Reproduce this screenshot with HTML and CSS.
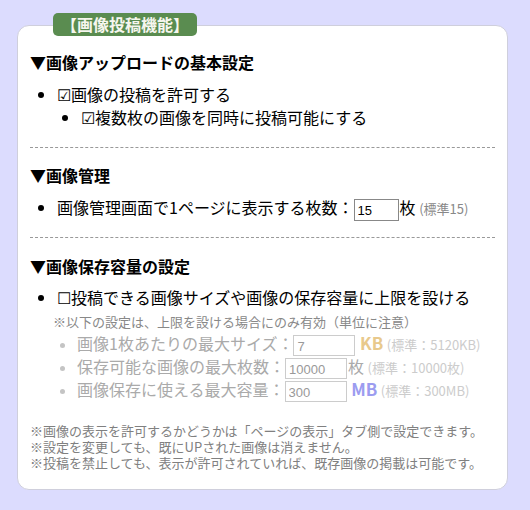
FILE: index.html
```html
<!DOCTYPE html>
<html lang="ja">
<head>
    <meta charset="UTF-8">
    <title>画像投稿機能</title>
    <link rel="stylesheet" href="styles.css">
</head>
<body>
    <div class="page">
        <div class="card">
            <div class="badge">【画像投稿機能】</div>

            <section class="sec">
                <h3 class="sec-title">▼画像アップロードの基本設定</h3>
                <ul class="opts">
                    <li>☑画像の投稿を許可する
                        <ul class="opts sub">
                            <li>☑複数枚の画像を同時に投稿可能にする</li>
                        </ul>
                    </li>
                </ul>
            </section>

            <hr class="sep">

            <section class="sec">
                <h3 class="sec-title">▼画像管理</h3>
                <ul class="opts">
                    <li>画像管理画面で1ページに表示する枚数：<input class="num" type="text" value="15">枚 <span class="hint">(標準15)</span></li>
                </ul>
            </section>

            <hr class="sep">

            <section class="sec sec-limit">
                <h3 class="sec-title">▼画像保存容量の設定</h3>
                <ul class="opts">
                    <li>☐投稿できる画像サイズや画像の保存容量に上限を設ける
                        <div class="note">※以下の設定は、上限を設ける場合にのみ有効（単位に注意）</div>
                        <ul class="opts off">
                            <li>画像1枚あたりの最大サイズ：<input class="num wide" type="text" value="7" disabled> <b class="kb">KB</b> <span class="hint">(標準：5120KB)</span></li>
                            <li>保存可能な画像の最大枚数：<input class="num wide" type="text" value="10000" disabled>枚 <span class="hint">(標準：10000枚)</span></li>
                            <li>画像保存に使える最大容量：<input class="num wide" type="text" value="300" disabled> <b class="mb">MB</b> <span class="hint">(標準：300MB)</span></li>
                        </ul>
                    </li>
                </ul>
            </section>

            <div class="foot">
                <p>※画像の表示を許可するかどうかは「ページの表示」タブ側で設定できます。</p>
                <p>※設定を変更しても、既にUPされた画像は消えません。</p>
                <p>※投稿を禁止しても、表示が許可されていれば、既存画像の掲載は可能です。</p>
            </div>
        </div>
    </div>
</body>
</html>
```

FILE: styles.css
```css
body{
    margin: 0;
    background-color: #dcdcfe;
    font-family: "Noto Sans CJK JP", sans-serif;
    color: #000;
}

.page{
    padding: 25px 22px 20px 17px;
}

.card{
    position: relative;
    background-color: #fff;
    border: 1px solid #cfcfdc;
    border-radius: 12px;
    padding: 24px 12px 18px;
}

.badge{
    position: absolute;
    left: 35px;
    top: -13px;
    width: 144px;
    height: 23px;
    line-height: 23px;
    text-align: center;
    background-color: #5a8c50;
    color: #f6f6ee;
    font-weight: bold;
    font-size: 16px;
    border-radius: 5px;
}

.sec-title{
    margin: 0;
    font-size: 16px;
    line-height: 24px;
    font-weight: bold;
}

.opts{
    margin: 9px 0 0;
    padding-left: 27px;
    font-size: 16px;
    line-height: 23px;
    list-style-type: disc;
}

.opts.sub{
    margin: 0;
    padding-left: 24px;
}

.sep{
    border: none;
    border-top: 1px dashed #999;
    margin: 18px 0 15px;
}

.sec-limit{
    padding-top: 1px;
}

.sec-limit > .opts{
    margin-top: 8px;
}

.num{
    width: 45px;
    height: 22px;
    box-sizing: border-box;
    border: 1px solid #888;
    padding: 1px 3px 0;
    font-family: "Liberation Sans", sans-serif;
    font-size: 13px;
    vertical-align: middle;
    margin: -2px 1px -2px 0;
}

.hint{
    font-size: 13px;
    line-height: 1;
    color: #888;
}

.note{
    margin: 4px 0 0 -4px;
    font-size: 13px;
    line-height: 17px;
    color: #888;
}

.off{
    margin: 2px 0 0;
    padding-left: 20px;
    color: #aaa;
}

.off li::marker{
    color: #c4c4c4;
    font-size: 14px;
}

.num.wide{
    width: 62px;
    height: 21px;
    border-color: #ccc;
    background-color: #fff;
    color: #999;
}

.off .hint{
    color: #ccc;
}

.kb,
.mb{
    font-size: 17px;
    line-height: 1;
}

.kb{
    color: #e8c98c;
}

.mb{
    color: #9c9cf0;
}

.foot{
    margin-top: 22px;
    font-size: 13px;
    color: #808080;
}

.foot p{
    margin: 0;
    height: 16px;
    line-height: 16px;
}
```
